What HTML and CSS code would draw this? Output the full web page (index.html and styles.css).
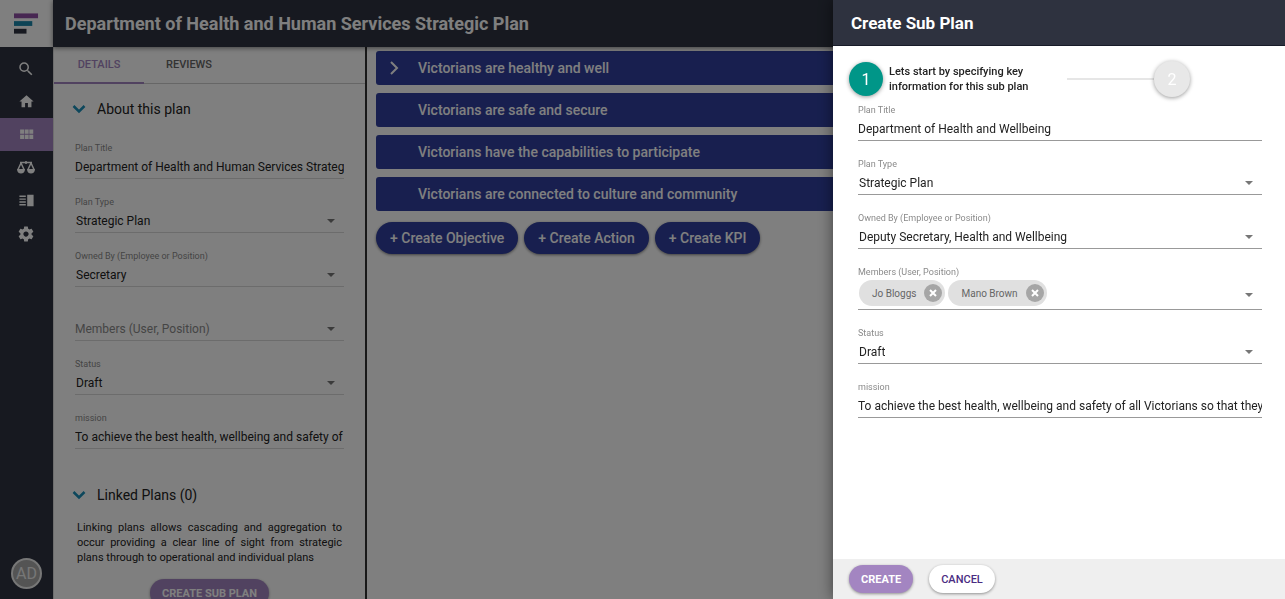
FILE: index.html
```html
<!DOCTYPE html>
<html lang="en">

<head>
    <meta charset="UTF-8">
    <meta name="viewport" content="width=device-width, initial-scale=1.0">
    <title>Create Sub Plan</title>

    <link rel="stylesheet" href="styles.css">
</head>

<body>
    <div class="app">
        <nav class="sidebar">
            <a href="#" class="logo" aria-label="Home page">
                <svg width="26" height="22" viewBox="0 0 26 22">
                    <rect x="0" y="0" width="25" height="5" fill="#8f4fa5" />
                    <rect x="0" y="8" width="19" height="5" fill="#1b87ab" />
                    <rect x="0" y="16" width="13" height="5" fill="#2e3340" />
                </svg>
            </a>
            <a href="#" class="nav-item" aria-label="Search">
                <svg width="18" height="18" viewBox="0 0 24 24"><path d="M15.5 14h-.79l-.28-.27A6.47 6.47 0 0 0 16 9.5 6.5 6.5 0 1 0 9.5 16c1.61 0 3.09-.59 4.23-1.57l.27.28v.79l5 4.99L20.49 19l-4.99-5zm-6 0C7.01 14 5 11.99 5 9.5S7.01 5 9.5 5 14 7.01 14 9.5 11.99 14 9.5 14z" /></svg>
            </a>
            <a href="#" class="nav-item" aria-label="Home">
                <svg width="17" height="17" viewBox="0 0 24 24"><path d="M10 20v-6h4v6h5v-8h3L12 3 2 12h3v8z" /></svg>
            </a>
            <a href="#" class="nav-item active" aria-label="Plans">
                <svg width="17" height="17" viewBox="0 0 24 24"><path d="M3 11h5.500V5H3v6zm0 7.500h5.500v-6H3v6zm6.500 0H15v-6H9.500v6zm6.500 0h5.500v-6H16v6zM9.500 11H15V5H9.500v6zM16 5v6h5.500V5H16z" /></svg>
            </a>
            <a href="#" class="nav-item" aria-label="Balance">
                <svg width="18" height="14" viewBox="0 0 18 14">
                    <path d="M3 1.500h12M9 0v3M4 2 1 8.500M4 2l3 6.500M14 2l-3 6.500M14 2l3 6.500" fill="none" stroke="currentColor" stroke-width="1.500" />
                    <path d="M0 8h8c0 3-1.800 4.500-4 4.500S0 11 0 8zM10 8h8c0 3-1.800 4.500-4 4.500S10 11 10 8z" />
                </svg>
            </a>
            <a href="#" class="nav-item" aria-label="Reports">
                <svg width="17" height="17" viewBox="0 0 24 24"><path d="M2 13h9v2H2zm0 4h9v2H2zm0-8h9v2H2zm0-4h9v2H2zM13 4h9v16h-9z" /></svg>
            </a>
            <a href="#" class="nav-item" aria-label="Settings">
                <svg width="18" height="18" viewBox="0 0 24 24"><path d="M19.430 12.980c.04-.32.07-.64.07-.98s-.03-.66-.07-.98l2.110-1.650c.19-.15.24-.42.12-.64l-2-3.460c-.12-.22-.39-.3-.61-.22l-2.490 1c-.52-.4-1.080-.73-1.690-.98l-.38-2.650A.49.49 0 0 0 14 2h-4c-.25 0-.46.18-.49.42l-.38 2.650c-.61.25-1.170.59-1.690.98l-2.490-1c-.23-.09-.49 0-.61.22l-2 3.460c-.13.22-.07.49.12.64l2.110 1.650c-.04.32-.07.65-.07.98s.03.66.07.98l-2.110 1.650c-.19.15-.24.42-.12.64l2 3.460c.12.22.39.3.61.22l2.490-1c.52.4 1.080.73 1.690.98l.38 2.650c.03.24.24.42.49.42h4c.25 0 .46-.18.49-.42l.38-2.650c.61-.25 1.170-.59 1.690-.98l2.490 1c.23.09.49 0 .61-.22l2-3.460c.12-.22.07-.49-.12-.64l-2.110-1.650zM12 15.500c-1.930 0-3.500-1.570-3.500-3.500s1.570-3.500 3.500-3.500 3.500 1.570 3.500 3.500-1.570 3.500-3.500 3.500z" /></svg>
            </a>
            <button type="button" class="avatar">AD</button>
        </nav>

        <div class="page">
            <header class="page-header">
                <h1>Department of Health and Human Services Strategic Plan</h1>
            </header>

            <div class="content">
                <aside class="details">
                    <div class="tabs" role="tablist">
                        <button type="button" class="tab selected" role="tab" aria-selected="true">DETAILS</button>
                        <button type="button" class="tab" role="tab" aria-selected="false">REVIEWS</button>
                    </div>

                    <section class="section">
                        <h2>
                            <svg width="14" height="10" viewBox="0 0 14 10"><path d="M1.500 2 7 7.500 12.500 2" /></svg>
                            About this plan
                        </h2>
                        <div class="field">
                            <label for="title">Plan Title</label>
                            <div class="control">
                                <input id="title" type="text" value="Department of Health and Human Services Strategic Plan">
                            </div>
                        </div>
                        <div class="field">
                            <label for="type">Plan Type</label>
                            <div class="control drop">
                                <select id="type"><option>Strategic Plan</option></select>
                            </div>
                        </div>
                        <div class="field">
                            <label for="owner">Owned By (Employee or Position)</label>
                            <div class="control drop">
                                <select id="owner"><option>Secretary</option></select>
                            </div>
                        </div>
                        <div class="field empty">
                            <div class="control drop">
                                <input id="members" type="text" aria-label="Members" placeholder="Members (User, Position)">
                            </div>
                        </div>
                        <div class="field">
                            <label for="status">Status</label>
                            <div class="control drop">
                                <select id="status"><option>Draft</option></select>
                            </div>
                        </div>
                        <div class="field">
                            <label for="mission">mission</label>
                            <div class="control">
                                <input id="mission" type="text" value="To achieve the best health, wellbeing and safety of all Victorians">
                            </div>
                        </div>
                    </section>

                    <section class="section linked">
                        <h2>
                            <svg width="14" height="10" viewBox="0 0 14 10"><path d="M1.500 2 7 7.500 12.500 2" /></svg>
                            Linked Plans (0)
                        </h2>
                        <p>Linking plans allows cascading and aggregation to occur providing a clear line of sight from strategic plans through to operational and individual plans</p>
                        <button type="button" class="btn primary">CREATE SUB PLAN</button>
                    </section>
                </aside>

                <main class="objectives">
                    <ul>
                        <li>
                            <svg width="10" height="14" viewBox="0 0 10 14"><path d="M2 1l6 6-6 6" /></svg>
                            <span>Victorians are healthy and well</span>
                        </li>
                        <li><span>Victorians are safe and secure</span></li>
                        <li><span>Victorians have the capabilities to participate</span></li>
                        <li><span>Victorians are connected to culture and community</span></li>
                    </ul>
                    <div class="actions">
                        <button type="button">+ Create Objective</button>
                        <button type="button">+ Create Action</button>
                        <button type="button">+ Create KPI</button>
                    </div>
                </main>
            </div>
        </div>
    </div>

    <div class="backdrop"></div>

    <form class="drawer">
        <header class="drawer-header">
            <h2>Create Sub Plan</h2>
        </header>

        <div class="drawer-body">
            <div class="stepper">
                <div class="step">
                    <span class="circle current">1</span>
                    <p>Lets start by specifying key<br>information for this sub plan</p>
                </div>
                <span class="line"></span>
                <span class="circle">2</span>
            </div>

            <div class="fields">
                <div class="field">
                    <label for="sub-title">Plan Title</label>
                    <div class="control">
                        <input id="sub-title" type="text" value="Department of Health and Wellbeing">
                    </div>
                </div>
                <div class="field">
                    <label for="sub-type">Plan Type</label>
                    <div class="control drop">
                        <select id="sub-type"><option>Strategic Plan</option></select>
                    </div>
                </div>
                <div class="field">
                    <label for="sub-owner">Owned By (Employee or Position)</label>
                    <div class="control drop">
                        <select id="sub-owner"><option>Deputy Secretary, Health and Wellbeing</option></select>
                    </div>
                </div>
                <div class="field">
                    <label for="sub-members">Members (User, Position)</label>
                    <div class="control drop chips">
                        <span class="chip">Jo Bloggs
                            <button type="button" aria-label="Remove Jo Bloggs">
                                <svg width="8" height="8" viewBox="0 0 8 8"><path d="M1 1l6 6M7 1 1 7" /></svg>
                            </button>
                        </span>
                        <span class="chip">Mano Brown
                            <button type="button" aria-label="Remove Mano Brown">
                                <svg width="8" height="8" viewBox="0 0 8 8"><path d="M1 1l6 6M7 1 1 7" /></svg>
                            </button>
                        </span>
                        <input id="sub-members" type="text">
                    </div>
                </div>
                <div class="field">
                    <label for="sub-status">Status</label>
                    <div class="control drop">
                        <select id="sub-status"><option>Draft</option></select>
                    </div>
                </div>
                <div class="field">
                    <label for="sub-mission">mission</label>
                    <div class="control">
                        <input id="sub-mission" type="text" value="To achieve the best health, wellbeing and safety of all Victorians so that they can live">
                    </div>
                </div>
            </div>
        </div>

        <footer class="drawer-footer">
            <button type="button" class="btn primary">CREATE</button>
            <button type="button" class="btn">CANCEL</button>
        </footer>
    </form>
</body>

</html>
```

FILE: styles.css
```css
* {
    box-sizing: border-box;
}

body {
    margin: 0;
    font-family: Roboto, sans-serif;
    font-size: 12px;
    color: #222;
    background: #fff;
}

h1,
h2,
p,
ul {
    margin: 0;
    padding: 0;
}

button,
input,
select {
    font-family: inherit;
}

button {
    border: none;
    cursor: pointer;
}

.app {
    display: flex;
    height: 100vh;
    overflow: hidden;
}

/* sidebar */

.sidebar {
    display: flex;
    flex-direction: column;
    flex: none;
    width: 53px;
    background: #2e3340;
}

.logo {
    display: flex;
    height: 47px;
    margin-bottom: 5px;
    padding: 13px 14px;
    background: #fff;
}

.nav-item {
    display: flex;
    align-items: center;
    justify-content: center;
    height: 33px;
    padding-right: 1px;
    color: #fff;
}

.nav-item svg {
    fill: currentColor;
}

.nav-item.active {
    background: #a385c1;
}

.avatar {
    width: 31px;
    height: 31px;
    margin: auto auto 10px;
    padding: 0;
    border: 2px solid #eee;
    border-radius: 50%;
    background: #a8a8a8;
    color: #eee;
    font-size: 16px;
}

/* page */

.page {
    display: flex;
    flex-direction: column;
    flex: 1;
    min-width: 0;
}

.page-header {
    z-index: 1;
    display: flex;
    align-items: center;
    flex: none;
    height: 47px;
    padding: 0 12px;
    background: #2e3340;
    box-shadow: 0 1px 5px rgba(0, 0, 0, 0.5);
}

.page-header h1 {
    color: #fff;
    font-size: 18px;
    font-weight: 700;
    white-space: nowrap;
}

.content {
    display: flex;
    flex: 1;
    min-height: 0;
}

.details {
    flex: none;
    width: 314px;
    border-right: 2px solid #333;
    border-left: 1px solid #ddd;
    overflow: auto;
    scrollbar-width: none;
}

.tabs {
    display: flex;
    height: 37px;
    border-bottom: 1px solid #ccc;
}

.tab {
    width: 90px;
    height: 37px;
    padding: 0;
    border-bottom: 2px solid transparent;
    background: none;
    color: #666;
    font-size: 11px;
    font-weight: 500;
}

.tab.selected {
    border-color: #a385c1;
    color: #a385c1;
}

.section {
    padding: 15px 21px 0;
}

.section h2 {
    display: flex;
    align-items: center;
    gap: 11px;
    margin: 0 -3px 23px;
    font-size: 14px;
    font-weight: 400;
    line-height: 20px;
}

.section h2 svg {
    fill: none;
    stroke: #1b8fb8;
    stroke-width: 2.5;
}

.linked {
    padding-top: 19px;
    text-align: center;
}

.linked h2 {
    margin-bottom: 15px;
}

.linked p {
    margin: 0 2px 14px;
    font-size: 11px;
    line-height: 15px;
    text-align: justify;
}

/* form fields */

.field {
    margin-bottom: 17px;
}

.field label {
    display: block;
    color: #8a8a8a;
    font-size: 9px;
    line-height: 13px;
}

.field.empty {
    padding-top: 13px;
}

.control {
    position: relative;
    display: flex;
    align-items: center;
    border-bottom: 1px solid #999;
}

.details .control {
    border-color: #d8d8d8;
}

.control input,
.control select {
    flex: 1;
    min-width: 0;
    height: 23px;
    padding: 0;
    border: none;
    outline: none;
    background: none;
    color: #222;
    font-size: 12px;
}

.control select {
    padding-left: 1px;
    appearance: none;
}

.control input::placeholder {
    color: #8a8a8a;
}

.drop::after {
    content: "";
    position: absolute;
    right: 9px;
    bottom: 9px;
    border: 4px solid transparent;
    border-top-color: #777;
    border-bottom: none;
    pointer-events: none;
}

.chips {
    gap: 3px;
    height: 31px;
    padding: 1px 0 3px 1px;
}

.chips::after {
    bottom: 12px;
}

.chip {
    display: flex;
    align-items: center;
    gap: 8px;
    height: 26px;
    padding: 0 3px 0 13px;
    border-radius: 13px;
    background: #e0e0e0;
    color: #666;
    font-size: 10px;
}

.chip button {
    display: flex;
    align-items: center;
    justify-content: center;
    width: 18px;
    height: 18px;
    padding: 0;
    border-radius: 50%;
    background: #a6a6a6;
}

.chip svg {
    stroke: #fff;
    stroke-width: 2;
}

/* objectives */

.objectives {
    flex: 1;
    min-width: 0;
    padding: 4px 9px;
}

.objectives ul {
    display: flex;
    flex-direction: column;
    gap: 8px;
    margin-bottom: 11px;
    list-style: none;
}

.objectives li {
    display: grid;
    grid-template-columns: 29px 1fr;
    align-items: center;
    height: 34px;
    padding: 0 13px;
    border-radius: 3px;
    background: #303f9f;
    color: #fff;
    font-size: 14px;
    font-weight: 500;
}

.objectives li span {
    grid-column: 2;
}

.objectives li svg {
    fill: none;
    stroke: #fff;
    stroke-width: 2;
}

.actions {
    display: flex;
    gap: 6px;
}

.actions button {
    height: 32px;
    padding: 0 14px;
    border-radius: 16px;
    background: #303f9f;
    box-shadow: 0 1px 3px rgba(0, 0, 0, 0.5);
    color: #fff;
    font-size: 14px;
    font-weight: 500;
}

.btn {
    height: 28px;
    padding: 0 12px;
    border-radius: 14px;
    background: #fff;
    box-shadow: 0 1px 3px rgba(0, 0, 0, 0.4);
    color: #4a2c82;
    font-size: 11px;
    font-weight: 500;
}

.btn.primary {
    background: #a385c1;
    color: #fff;
    font-weight: 700;
}

/* drawer */

.backdrop {
    position: fixed;
    inset: 0;
    z-index: 2;
    background: rgba(0, 0, 0, 0.5);
}

.drawer {
    position: fixed;
    top: 0;
    right: 0;
    bottom: 0;
    z-index: 3;
    display: flex;
    flex-direction: column;
    width: 452px;
    max-width: 100%;
    background: #fff;
    box-shadow: 0 0 14px rgba(0, 0, 0, 0.5);
}

.drawer-header {
    display: flex;
    align-items: center;
    flex: none;
    height: 46px;
    padding: 0 18px;
    border-bottom: 1px solid #171b28;
    background: #2e323f;
}

.drawer-header h2 {
    color: #fff;
    font-size: 17px;
    font-weight: 700;
}

.drawer-body {
    flex: 1;
    min-height: 0;
    overflow: auto;
}

.stepper {
    display: grid;
    grid-template-columns: 1fr 87px 36px;
    align-items: center;
    padding: 15px 95px 7px 16px;
}

.step {
    display: flex;
    align-items: center;
    gap: 6px;
}

.step p {
    font-size: 11px;
    font-weight: 500;
    line-height: 15px;
    white-space: nowrap;
}

.circle {
    display: flex;
    align-items: center;
    justify-content: center;
    width: 36px;
    height: 36px;
    border-radius: 50%;
    background: #e8e8e8;
    box-shadow: 0 1px 4px rgba(0, 0, 0, 0.4);
    color: #fff;
    font-size: 16px;
}

.circle.current {
    width: 34px;
    height: 34px;
    background: #009688;
}

.line {
    height: 2px;
    background: #e6e6e6;
}

.fields {
    padding: 0 23px 0 25px;
}

.drawer-footer {
    display: flex;
    align-items: center;
    gap: 16px;
    flex: none;
    height: 40px;
    padding: 0 16px;
    background: #efefef;
}
```
